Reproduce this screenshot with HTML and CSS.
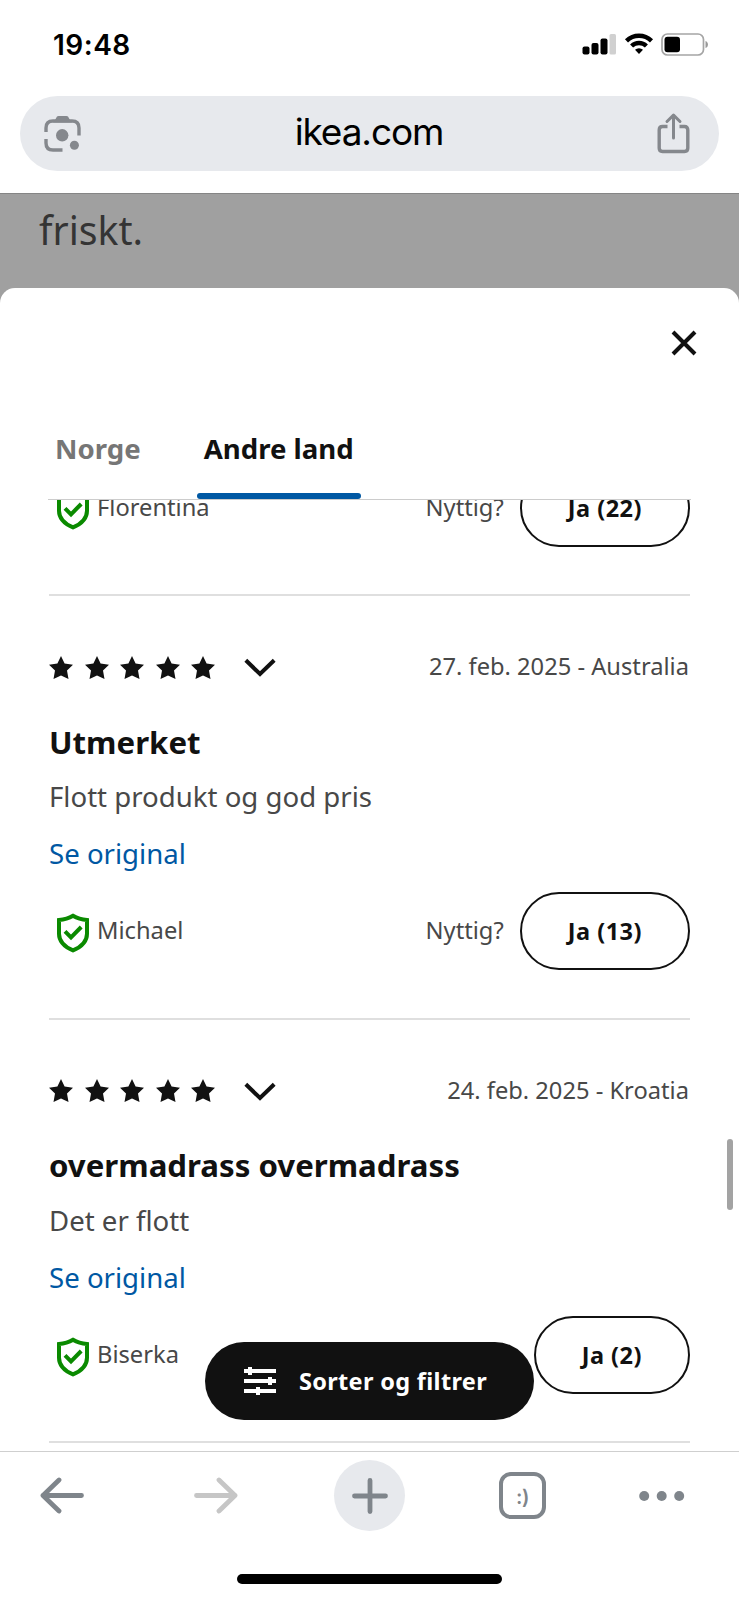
FILE: index.html
```html
<!DOCTYPE html>
<html lang="no">
<head>
<meta charset="utf-8">
<title>ikea.com</title>
<link rel="stylesheet" href="styles.css">
</head>
<body>
<svg class="defs" width="0" height="0" aria-hidden="true">
  <symbol id="star" viewBox="0 0 24 24"><path d="M12 0l3.600 7.600 8.400 1.100-6 5.700 1.500 8.600L12 19.400l-7.500 3.600 1.500-8.600-6-5.700 8.400-1.100z"/></symbol>
  <symbol id="chevron" viewBox="0 0 32 20"><path d="M1.800 2.200L16 16 30.200 2.200" fill="none" stroke="currentColor" stroke-width="4"/></symbol>
  <symbol id="shield" viewBox="0 0 32 40"><path d="M16 2.800C12 5.200 7.500 6.600 2 7V20.700C2 28.700 8 34 16 37.400 24 34 30 28.700 30 20.700V7C24.500 6.600 20 5.200 16 2.800Z" fill="none" stroke="currentColor" stroke-width="4"/><path d="M8 18.300l6 6L24.200 14" fill="none" stroke="currentColor" stroke-width="4"/></symbol>
</svg>
<div class="phone">
  <header class="status">
    <span class="time">19:48</span>
    <div class="status-icons">
      <svg width="35" height="22" viewBox="0 0 35 22"><rect x="0.500" y="13.500" width="7" height="8" rx="2"/><rect x="9.500" y="10" width="7" height="11.500" rx="2"/><rect x="18.500" y="5.500" width="7" height="16" rx="2"/><rect x="27.500" y="1" width="6.500" height="20.500" rx="1.500" fill="#d0d0d0"/></svg>
      <svg width="30" height="22" viewBox="0 0 30 22"><path d="M2.500 7.800a18 18 0 0 1 25 0M7.600 13a10.800 10.800 0 0 1 14.800 0" fill="none" stroke="#000" stroke-width="4.400"/><path d="M15 21l-4-4.200a6 6 0 0 1 8 0z"/></svg>
      <svg width="48" height="23" viewBox="0 0 48 23"><rect x="1" y="1" width="41.500" height="21" rx="5.500" fill="none" stroke="#a5a5a5" stroke-width="1.700"/><rect x="3.500" y="3.700" width="15.500" height="15.600" rx="3"/><path d="M44.500 8c3.300 1 3.300 6 0 7z" fill="#999"/></svg>
    </div>
  </header>
  <div class="address">
    <svg width="37" height="37" viewBox="0 0 37 37" fill="none" stroke="#85888d" stroke-width="3.400"><path d="M2 17V13Q2 6 9 6H28Q35 6 35 13V20.500M2 24V28Q2 35 9 35H18.500"/><path d="M11 5l2-3.500Q13.500 1 14.500 1h8q1 0 1.500.5L26 5l2 2.500H9z" fill="#85888d" stroke="none"/><circle cx="18.200" cy="20.300" r="6.200" fill="#85888d" stroke="none"/><circle cx="30.400" cy="30.200" r="4.500" fill="#85888d" stroke="none"/></svg>
    <span class="host">ikea.com</span>
    <svg width="33" height="41" viewBox="0 0 33 41" fill="none" stroke="#85888d" stroke-width="3.400" stroke-linecap="round" stroke-linejoin="round"><path d="M10.500 13.500H5.500Q2.200 13.500 2.200 17V35Q2.200 38.500 5.500 38.500H27.500Q30.800 38.500 30.800 35V17Q30.800 13.500 27.500 13.500H22.500" stroke-linecap="butt"/><path d="M16.500 25V3M10 8.500L16.500 2.200 23 8.500" stroke-width="3"/></svg>
  </div>
  <main class="page">
    <p class="backdrop-text">friskt.</p>
    <section class="sheet">
      <div class="sheet-top">
        <svg width="26" height="26" viewBox="0 0 26 26"><path d="M2 2l22 22m0-22l-22 22" stroke="#111" stroke-width="4"/></svg>
      </div>
      <nav class="tabs">
        <span class="tab">Norge</span>
        <span class="tab active">Andre land</span>
      </nav>
      <div class="reviews">
        <article class="review first">
          <div class="foot"><svg class="shield"><use href="#shield"/></svg><span class="name">Florentina</span><span class="useful">Nyttig?</span><span class="vote">Ja (22)</span></div>
        </article>
        <article class="review">
          <div class="head">
            <div class="stars"><svg><use href="#star"/></svg><svg><use href="#star"/></svg><svg><use href="#star"/></svg><svg><use href="#star"/></svg><svg><use href="#star"/></svg></div>
            <svg class="chevron"><use href="#chevron"/></svg>
            <span class="date">27. feb. 2025 - Australia</span>
          </div>
          <h2 class="title">Utmerket</h2>
          <p class="text">Flott produkt og god pris</p>
          <span class="link">Se original</span>
          <div class="foot"><svg class="shield"><use href="#shield"/></svg><span class="name">Michael</span><span class="useful">Nyttig?</span><span class="vote">Ja (13)</span></div>
        </article>
        <article class="review">
          <div class="head">
            <div class="stars"><svg><use href="#star"/></svg><svg><use href="#star"/></svg><svg><use href="#star"/></svg><svg><use href="#star"/></svg><svg><use href="#star"/></svg></div>
            <svg class="chevron"><use href="#chevron"/></svg>
            <span class="date">24. feb. 2025 - Kroatia</span>
          </div>
          <h2 class="title">overmadrass overmadrass</h2>
          <p class="text">Det er flott</p>
          <span class="link">Se original</span>
          <div class="foot"><svg class="shield"><use href="#shield"/></svg><span class="name">Biserka</span><span class="vote">Ja (2)</span></div>
        </article>
      </div>
      <div class="filter">
        <svg width="32" height="28" viewBox="0 0 32 28" fill="#fff"><path d="M0 2h32v4H0zM0 12h32v4H0zM0 22h32v4H0z"/><path d="M4 0h4v8H4zM24 10h4v8h-4zM12 20h4v8h-4z"/></svg>
        <span>Sorter og filtrer</span>
      </div>
      <div class="scrollbar"></div>
    </section>
  </main>
  <footer class="toolbar">
    <div class="tools">
      <svg width="44" height="37" viewBox="0 0 44 37" fill="none" stroke="#7f858b" stroke-width="4.800" stroke-linecap="round" stroke-linejoin="round"><path d="M41.500 18.500H3M19 3L3 18.500 19 34"/></svg>
      <svg class="forward" width="44" height="37" viewBox="0 0 44 37" fill="none" stroke="#c6c6c6" stroke-width="4.800" stroke-linecap="round" stroke-linejoin="round"><path d="M2.500 18.500H41M25 3L41 18.500 25 34"/></svg>
      <div class="plus"><svg width="36" height="36" viewBox="0 0 36 36" stroke="#7f858b" stroke-width="4.800" stroke-linecap="round"><path d="M18 2.500v31M2.500 18h31"/></svg></div>
      <div class="tabcount"><span>:)</span></div>
      <svg class="more" width="46" height="10" viewBox="0 0 46 10" fill="#7f858b"><circle cx="5.200" cy="5" r="5"/><circle cx="22.700" cy="5" r="5"/><circle cx="40.200" cy="5" r="5"/></svg>
    </div>
    <div class="home"></div>
  </footer>
</div>
</body>
</html>
```
FILE: styles.css
```css
* { box-sizing: border-box; }
body { margin: 0; background: #fff; }
.defs { position: absolute; }
svg { display: block; flex: none; }
.phone {
  width: 739px;
  height: 1600px;
  display: flex;
  flex-direction: column;
  overflow: hidden;
  font-family: "Noto Sans", sans-serif;
  color: #111;
}
.status {
  height: 96px;
  flex: none;
  display: flex;
  justify-content: space-between;
  padding: 27px 30px 0 53px;
}
.time {
  font: 600 28px/36px Inter, sans-serif;
  letter-spacing: 0.5px;
  color: #000;
}
.status-icons { display: flex; gap: 7px; padding-top: 6px; }
.address {
  height: 75px;
  flex: none;
  margin: 0 20px;
  border-radius: 38px;
  background: #e7e9ed;
  display: flex;
  align-items: center;
  justify-content: space-between;
  padding: 0 29px 0 24px;
}
.host {
  font: 400 37px/44px Inter, sans-serif;
  letter-spacing: -1.1px;
  padding-bottom: 3px;
  color: #000;
}
.page {
  height: 1258px;
  flex: none;
  margin-top: 22px;
  background: #a0a0a0;
  border-top: 1px solid #858585;
  display: flex;
  flex-direction: column;
}
.backdrop-text {
  margin: 0;
  height: 94px;
  flex: none;
  padding: 9px 0 0 39px;
  font-size: 39.200px;
  line-height: 54px;
  color: #343434;
}
.sheet {
  position: relative;
  flex: 1;
  min-height: 0;
  display: flex;
  flex-direction: column;
  background: #fff;
  border-radius: 15px 15px 0 0;
  overflow: hidden;
}
.sheet-top {
  height: 124px;
  flex: none;
  display: flex;
  justify-content: flex-end;
  padding: 42px 42px 0 0;
}
.tabs {
  height: 88px;
  flex: none;
  margin: 0 48px;
  border-bottom: 1px solid #ccc;
  display: flex;
  gap: 49px;
}
.tab {
  padding: 16px 7px 0;
  font-weight: 700;
  font-size: 27.600px;
  line-height: 40px;
  color: #767676;
}
.tab.active {
  color: #111;
  position: relative;
}
.tab.active::after {
  content: "";
  position: absolute;
  left: 0;
  right: 0;
  bottom: 0;
  height: 6px;
  border-radius: 3px;
  background: #0058a3;
}
.reviews {
  flex: 1;
  min-height: 0;
  overflow: hidden;
  padding: 0 49px;
}
.review {
  padding: 48px 0 47.500px;
  border-bottom: 2px solid #dfdfdf;
}
.review.first { margin-top: -31.500px; padding-top: 0; }
.head { height: 47px; display: flex; align-items: center; }
.stars { display: flex; gap: 11.500px; }
.stars svg { width: 24px; height: 24px; fill: #111; }
.chevron { width: 32px; height: 20px; margin-left: 29px; margin-top: 1px; }
.date {
  margin-left: auto;
  padding: 0 1px 3px 0;
  font-size: 23.700px;
  color: #484848;
}
.title {
  margin: 28.500px 0 0;
  font-size: 31.200px;
  line-height: 44px;
  font-weight: 700;
}
.text {
  margin: 12.500px 0 0;
  font-size: 27.600px;
  line-height: 40px;
  color: #484848;
}
.link {
  display: block;
  margin: 17px 0 19px;
  font-size: 27.600px;
  line-height: 40px;
  color: #0058a3;
}
.foot {
  height: 78px;
  display: flex;
  align-items: center;
  font-size: 23.700px;
  color: #484848;
}
.shield { width: 32px; height: 40px; margin: 4px 8px 0; color: #0a8a00; }
.name, .useful { padding-bottom: 2px; }
.useful { margin-left: auto; margin-right: 16px; }
.vote {
  height: 78px;
  padding: 0 46px;
  border: 2px solid #111;
  border-radius: 39px;
  font-weight: 700;
  font-size: 23.500px;
  letter-spacing: 0.500px;
  line-height: 74px;
  color: #111;
}
.name + .vote { margin-left: auto; }
.filter {
  position: absolute;
  left: 205px;
  top: 1054px;
  width: 329px;
  height: 78px;
  border-radius: 39px;
  background: #111;
  color: #fff;
  display: flex;
  align-items: center;
  gap: 23px;
  padding-left: 39px;
  font-size: 23.500px;
  letter-spacing: 0.320px;
  font-weight: 700;
}
.scrollbar {
  position: absolute;
  right: 6px;
  top: 851px;
  width: 6px;
  height: 71px;
  border-radius: 3px;
  background: #a3a3a3;
}
.toolbar {
  flex: 1;
  border-top: 1px solid #cfcfcf;
  background: #fff;
  display: flex;
  flex-direction: column;
  align-items: center;
}
.tools {
  width: 100%;
  height: 87px;
  display: flex;
  align-items: center;
  padding-left: 40px;
}
.forward { margin-left: 110px; }
.plus {
  width: 71px;
  height: 71px;
  margin-left: 96px;
  border-radius: 50%;
  background: #e7e9ed;
  display: grid;
  place-items: center;
}
.tabcount {
  width: 47px;
  height: 47px;
  margin-left: 94px;
  border: 4px solid #7f858b;
  border-radius: 12px;
  display: grid;
  place-items: center;
  padding-top: 2px;
  font: 600 20px/24px Inter, sans-serif;
  letter-spacing: -0.5px;
  color: #7f858b;
}
.more { margin-left: 93px; }
.home {
  width: 265px;
  height: 10px;
  margin-top: 35px;
  border-radius: 5px;
  background: #000;
}
```
